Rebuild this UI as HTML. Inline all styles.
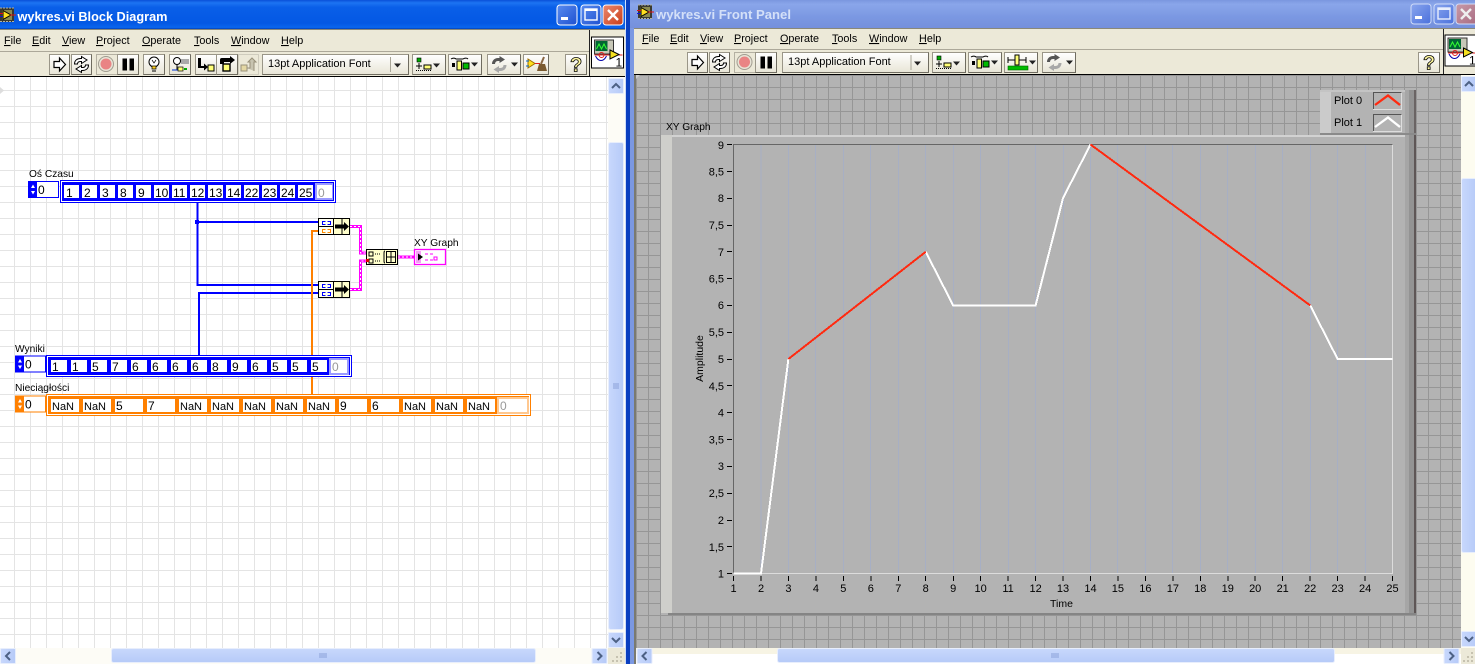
<!DOCTYPE html>
<html><head><meta charset="utf-8"><title>wykres.vi</title>
<style>
html,body{margin:0;padding:0;background:#fff;width:1475px;height:664px;overflow:hidden}
svg{position:absolute;left:0;top:0;display:block}
text{font-family:"Liberation Sans",sans-serif;font-size:11px;fill:#000}
.tb{font-weight:bold;font-size:13px}
.b{fill:url(#btn);stroke:#9a9688;stroke-width:1}
.d{fill:none;stroke:#6f6c60;stroke-width:1}
.m{font-size:10.8px}
.l{font-size:10.2px}
.n{font-size:12px}
.u{text-decoration:underline}
</style></head><body>
<svg width="1475" height="664" viewBox="0 0 1475 664" xmlns="http://www.w3.org/2000/svg">
<defs>
<linearGradient id="act" x1="0" y1="0" x2="0" y2="1"><stop offset="0" stop-color="#0a50d8"/><stop offset=".1" stop-color="#1d74f2"/><stop offset=".25" stop-color="#0a5fe8"/><stop offset=".8" stop-color="#0458e4"/><stop offset=".95" stop-color="#0a66ee"/><stop offset="1" stop-color="#0040b8"/></linearGradient>
<linearGradient id="ina" x1="0" y1="0" x2="0" y2="1"><stop offset="0" stop-color="#7a96df"/><stop offset=".15" stop-color="#8aa6ea"/><stop offset=".6" stop-color="#7b98e2"/><stop offset="1" stop-color="#7590dc"/></linearGradient>
<linearGradient id="btn" x1="0" y1="0" x2="0" y2="1"><stop offset="0" stop-color="#fff"/><stop offset="1" stop-color="#e8e5d6"/></linearGradient>
<linearGradient id="thV" x1="0" y1="0" x2="1" y2="0"><stop offset="0" stop-color="#c8d8fc"/><stop offset="1" stop-color="#b6caf8"/></linearGradient>
<linearGradient id="thH" x1="0" y1="0" x2="0" y2="1"><stop offset="0" stop-color="#c8d8fc"/><stop offset="1" stop-color="#b6caf8"/></linearGradient>
<linearGradient id="bl" x1="0" y1="0" x2="1" y2="1"><stop offset="0" stop-color="#5a8cf0"/><stop offset="1" stop-color="#1d50d0"/></linearGradient>
<linearGradient id="rd" x1="0" y1="0" x2="1" y2="1"><stop offset="0" stop-color="#ec8a70"/><stop offset="1" stop-color="#c83c18"/></linearGradient>
<linearGradient id="bl2" x1="0" y1="0" x2="1" y2="1"><stop offset="0" stop-color="#8aa6ee"/><stop offset="1" stop-color="#4a70dc"/></linearGradient>
<linearGradient id="rd2" x1="0" y1="0" x2="1" y2="1"><stop offset="0" stop-color="#c89aa8"/><stop offset="1" stop-color="#a86a80"/></linearGradient>
<pattern id="gl" patternUnits="userSpaceOnUse" x="14" y="10" width="16" height="16"><rect width="16" height="16" fill="#fff"/><rect width="16" height="1" fill="#e4e4e4"/><rect width="1" height="16" fill="#e4e4e4"/></pattern>
<pattern id="gr" patternUnits="userSpaceOnUse" x="0" y="3" width="12" height="12"><rect width="12" height="12" fill="#b3b3b3"/><rect width="12" height="1" fill="#969696"/><rect width="1" height="12" fill="#969696"/></pattern>
<g id="upA"><rect x="0" y="0" width="15" height="15" rx="1" fill="url(#thV)" stroke="#e8eefc"/><path d="M3.500 9.500 7.500 5.500 11.500 9.500" fill="none" stroke="#4d6185" stroke-width="2"/></g>
<g id="dnA"><rect x="0" y="0" width="15" height="15" rx="1" fill="url(#thV)" stroke="#e8eefc"/><path d="M3.500 5.500 7.500 9.500 11.500 5.500" fill="none" stroke="#4d6185" stroke-width="2"/></g>
<g id="lfA"><rect x="0" y="0" width="15" height="15" rx="1" fill="url(#thV)" stroke="#e8eefc"/><path d="M9.500 3.500 5.500 7.500 9.500 11.500" fill="none" stroke="#4d6185" stroke-width="2"/></g>
<g id="rtA"><rect x="0" y="0" width="15" height="15" rx="1" fill="url(#thV)" stroke="#e8eefc"/><path d="M5.500 3.500 9.500 7.500 5.500 11.500" fill="none" stroke="#4d6185" stroke-width="2"/></g>
<g id="vi"><rect x="0" y="0" width="14" height="14" fill="#3a3a30"/><path d="M0 0h14M0 13.500h14" stroke="#b0b0a0" stroke-dasharray="2 1"/><rect x="2" y="2" width="10" height="10" fill="#8a8a50"/><path d="M3 2.500 11 7 3 11.500z" fill="#ffe020" stroke="#000"/><path d="M-1 5.500h4" stroke="#e01010"/><path d="M-1 8.500h4" stroke="#1010e0"/><path d="M10 7h6" stroke="#e01010"/></g>
<g id="conn"><rect x="0" y="0" width="32" height="31" fill="#fff" stroke="#000"/><rect x="3" y="3" width="19" height="14" fill="#c8c8b8" stroke="#333"/><rect x="4" y="4" width="12" height="10" fill="#063"/><path d="M5 12 7.500 7 10 12 12.500 7 15 12" fill="none" stroke="#3f3" stroke-width="1"/><path d="M4 19c3 6 8 6 11 0" fill="none" stroke="#00a" stroke-width="1"/><circle cx="10" cy="18" r="2.500" fill="none" stroke="#e02020"/><path d="M3 18H31" stroke="#e02020"/><path d="M18.500 13 27.500 17.500 18.500 22z" fill="#f5e020" stroke="#000"/><text x="24" y="29.500" style="font-size:12px">1</text></g>
<g id="runI"><path d="M5 7.500h5.500V4l6 6.500-6 6.500v-3.500H5z" fill="#fff" stroke="#000" stroke-width="1.200"/></g>
<g id="loopI"><path d="M3.500 10c0-3.500 2.500-5.500 6-5.500h1V2.500l5.500 3.500-5.500 3.500V7.500h-1c-2 0-3 1-3 2.500z" fill="#fff" stroke="#000"/><path d="M17.500 11c0 3.500-2.500 5.500-6 5.500h-1v2L5 15l5.500-3.500v2h1c2 0 3-1 3-2.500z" fill="#fff" stroke="#000"/></g>
<g id="recI"><circle cx="10" cy="10" r="7.500" fill="#e8e4d6" stroke="#a09c90"/><circle cx="10" cy="10" r="5.500" fill="#e98484"/></g>
<g id="pauseI"><rect x="5" y="4" width="4.500" height="12" fill="#000"/><rect x="12" y="4" width="4.500" height="12" fill="#000"/></g>
<g id="alignI"><rect x="5" y="4" width="4" height="4" fill="#0a0" stroke="#000" stroke-width=".6"/><path d="M7 9v3M4 12h6M7 12v3" stroke="#000" fill="none"/><rect x="12" y="11" width="7" height="4" fill="#ff7" stroke="#000"/><path d="M4 16.500h15" stroke="#000" stroke-dasharray="1 1"/><path d="M21 9.500h7l-3.500 4z" fill="#222"/></g>
<g id="distI"><path d="M3 5c3-2 5 0 5 0h7s3-2 5 0" fill="none" stroke="#000"/><rect x="4" y="9" width="3" height="4" fill="#000"/><rect x="9" y="7" width="4.500" height="9" fill="#ff7" stroke="#000"/><rect x="15" y="9" width="6" height="6" fill="#0b0" stroke="#000"/><path d="M23 8.500h7l-3.500 4z" fill="#222"/></g>
<g id="reordI"><path d="M3 10c0-3.500 2.500-6 6-6h1.500V2l5.500 3.500L10.500 9V7H9c-2 0-3 1.500-3 3z" fill="#555"/><path d="M17.500 11c0 3.500-2.500 6-6 6H10v2l-5.500-3.500L10 12v2h1.500c2 0 3-1.500 3-3z" fill="#a8a8a8"/><path d="M22 8.500h7l-3.500 4z" fill="#222"/></g>
<g id="helpI"><text x="5" y="16.500" style="font-size:20px;font-weight:bold;fill:#fff8a0;stroke:#000;stroke-width:.8px">?</text></g>
<g id="bund"><rect x=".5" y=".5" width="31" height="16" fill="#ffffcc" stroke="#000"/><rect x="1" y="1" width="14" height="7.500" fill="#fffff0"/><rect x="1" y="9" width="14" height="7" fill="#fffff0"/><path d="M1 8.500h14M15.500 1v15M24 1v15" stroke="#000" fill="none"/><path d="M17 6.500h9V4l5 4.500-5 4.500v-2.500h-9z" fill="#000"/></g>
<g id="idx"><rect x=".5" y=".5" width="30" height="16" fill="#fff" stroke="currentColor"/><rect x="1" y="1" width="8" height="15" fill="currentColor"/><path d="M3 7 5 3.500 7 7zM3 10 5 13.500 7 10z" fill="#fff"/><text x="10" y="13" style="font-size:12px">0</text></g>
</defs>

<!-- LEFT WINDOW -->
<rect x="0" y="0" width="630" height="664" fill="#0a50d8"/>
<rect x="0" y="0" width="630" height="29" fill="url(#act)"/>
<use href="#vi" x="0" y="8"/>
<text class="tb" x="17.500" y="21" textLength="150" lengthAdjust="spacingAndGlyphs" style="fill:#fff">wykres.vi Block Diagram</text>
<rect x="557" y="5" width="20" height="20" rx="3" fill="url(#bl)" stroke="#fff"/><rect x="561" y="17" width="7" height="3" fill="#fff"/>
<rect x="581" y="5" width="20" height="20" rx="3" fill="url(#bl)" stroke="#fff"/><rect x="585" y="9" width="12" height="11" fill="none" stroke="#fff" stroke-width="1.400"/><path d="M585 10h12" stroke="#fff" stroke-width="2"/>
<rect x="603" y="5" width="20" height="20" rx="3" fill="url(#rd)" stroke="#fff"/><path d="M608 10 618 20M618 10 608 20" stroke="#fff" stroke-width="2.400"/>
<rect x="0" y="29" width="625" height="23" fill="#ece9d8"/>
<rect x="0" y="29" width="625" height="1" fill="#8a8878"/>
<rect x="0" y="51" width="589" height="1" fill="#aca899"/>
<rect x="0" y="52" width="625" height="24" fill="#ece9d8"/>
<rect x="0" y="76" width="625" height="1" fill="#000"/>
<rect x="589" y="30" width="1" height="46" fill="#222"/>
<text class="m" x="4" y="44"><tspan class="u">F</tspan>ile</text>
<text class="m" x="32" y="44"><tspan class="u">E</tspan>dit</text>
<text class="m" x="62" y="44"><tspan class="u">V</tspan>iew</text>
<text class="m" x="96" y="44"><tspan class="u">P</tspan>roject</text>
<text class="m" x="142" y="44"><tspan class="u">O</tspan>perate</text>
<text class="m" x="194" y="44"><tspan class="u">T</tspan>ools</text>
<text class="m" x="231" y="44"><tspan class="u">W</tspan>indow</text>
<text class="m" x="281" y="44"><tspan class="u">H</tspan>elp</text>
<use href="#conn" x="591.500" y="37"/>
<!-- left toolbar -->
<rect class="b" x="49.500" y="54.500" width="20" height="20"/><path class="d" d="M69.500 54.500v20h-20"/><use href="#runI" x="49" y="54"/>
<rect class="b" x="71.500" y="54.500" width="20" height="20"/><path class="d" d="M91.500 54.500v20h-20"/><use href="#loopI" x="71" y="54"/>
<rect x="96.500" y="54.500" width="21" height="20" fill="#ece9d8" stroke="#b4b0a2"/><use href="#recI" x="96" y="54"/>
<rect class="b" x="117.500" y="54.500" width="21" height="20"/><path class="d" d="M138.500 54.500v20h-21"/><use href="#pauseI" x="117.500" y="54.500"/>
<rect class="b" x="143.500" y="54.500" width="21" height="20"/><path class="d" d="M164.500 54.500v20h-21"/>
<circle cx="154" cy="62" r="5" fill="#fff" stroke="#000"/><path d="M152 66h4v3h-4z" fill="#ffd020" stroke="#000" stroke-width=".7"/><path d="M152 71h4" stroke="#000"/><path d="M152 60l2 3 2-3" fill="none" stroke="#000" stroke-width=".7"/>
<rect class="b" x="169.500" y="54.500" width="21" height="20"/><path class="d" d="M190.500 54.500v20h-21"/>
<circle cx="177" cy="61" r="3.500" fill="#fff" stroke="#000"/><path d="M177 64.500V70" stroke="#000"/><rect x="181" y="59" width="8" height="5" fill="#aaa"/><path d="M172 70h10" stroke="#03c"/><rect x="178" y="67" width="5" height="4" fill="#ff7" stroke="#000" stroke-width=".7"/><path d="M184 69h3" stroke="#0a0" stroke-width="2"/>
<rect class="b" x="195.500" y="54.500" width="21" height="20"/><path class="d" d="M216.500 54.500v20h-21"/>
<path d="M198 58h3v8h3v-2.500l4 3.500-4 3.500V68h-6z" fill="#000"/><rect x="208" y="65" width="6" height="6" fill="#ff7" stroke="#000"/>
<rect class="b" x="216.500" y="54.500" width="21" height="20"/><path class="d" d="M237.500 54.500v20h-21"/>
<path d="M220 64v-4c0-2 1-2 3-2h7v-2l5 4-5 4v-2h-6v2z" fill="#000"/><rect x="223" y="64" width="7" height="7" fill="#ff7" stroke="#000" stroke-width="1.400"/>
<rect x="238.500" y="54.500" width="20" height="20" fill="#ece9d8" stroke="#cfccbd"/>
<rect x="241" y="65" width="6" height="6" fill="#e4d8a4" stroke="#98917a"/><path d="M247 68h3v-6h-2l4-4 4 4h-2v9" fill="#c8c4b0" stroke="#98917a"/>
<rect class="b" x="262.500" y="54.500" width="146" height="20"/><path class="d" d="M408.500 54.500v20h-146"/>
<text x="268" y="67">13pt Application Font</text><path d="M390.500 57v15" stroke="#a8a597"/><path d="M394 63.500h7l-3.500 4z" fill="#222"/>
<rect class="b" x="412.500" y="54.500" width="33" height="20"/><path class="d" d="M445.500 54.500v20h-33"/><use href="#alignI" x="412" y="54"/>
<rect class="b" x="448.500" y="54.500" width="33" height="20"/><path class="d" d="M481.500 54.500v20h-33"/><use href="#distI" x="448" y="54"/>
<rect class="b" x="487.500" y="54.500" width="33" height="20"/><path class="d" d="M520.500 54.500v20h-33"/><use href="#reordI" x="489" y="54"/>
<rect class="b" x="523.500" y="54.500" width="25" height="20"/><path class="d" d="M548.500 54.500v20h-25"/>
<path d="M528 59l7 4.500-7 4.500z" fill="#ffe020" stroke="#a07000"/><path d="M526 61h3M526 66h3" stroke="#06c"/><path d="M535 63.500h5" stroke="#e02020"/><path d="M544 57l-3 7" stroke="#864" stroke-width="2"/><path d="M537 71l2-7h6l2 7z" fill="#7a5a30"/>
<rect class="b" x="565.500" y="54.500" width="21" height="20"/><path class="d" d="M586.500 54.500v20h-21"/><use href="#helpI" x="565" y="55"/>

<!-- left canvas -->
<rect x="0" y="77" width="608" height="571" fill="url(#gl)"/>
<path d="M0 87l4 3.500-4 3.500z" fill="#ddd"/>
<!-- left scrollbars -->
<rect x="608" y="77" width="17" height="571" fill="#fdfcf6"/>
<rect x="608.500" y="142.500" width="15" height="487" rx="2" fill="url(#thV)" stroke="#e8eefc"/>
<path d="M613 384h6M613 386h6M613 388h6" stroke="#8aa0d8"/>
<use href="#upA" x="608.500" y="78.500"/><use href="#dnA" x="608.500" y="632.500"/>
<rect x="0" y="648" width="608" height="16" fill="#fdfcf6"/>
<rect x="111.500" y="648.500" width="424" height="14" rx="2" fill="url(#thH)" stroke="#e8eefc"/>
<path d="M320 653v5M322 653v5M324 653v5M326 653v5" stroke="#8aa0d8"/>
<use href="#lfA" x=".5" y="648.500"/><use href="#rtA" x="592" y="648.500"/>
<rect x="608" y="648" width="17" height="16" fill="#ece9d8"/>
<path d="M620 652h2v2h-2zM616 656h2v2h-2zM620 656h2v2h-2zM612 660h2v2h-2zM616 660h2v2h-2zM620 660h2v2h-2z" fill="#c6c2b0"/>
<rect x="625" y="0" width="1" height="664" fill="#fff" opacity=".8"/>
<rect x="626" y="0" width="4" height="664" fill="#0a3fc0"/>

<!-- DIAGRAM wires -->
<g fill="none">
<path d="M197.500 203V286M197 222H318M197 285H318M199 294V355M198 293H318" stroke="#0000ff" stroke-width="2"/>
<path d="M312 394V231H318" stroke="#ff8000" stroke-width="2"/>
<path d="M350 226.500H360.500V253H367M350 289.500H360.500V261H367M398 257H414" stroke="#ff00ff" stroke-width="3"/>
<path d="M350 226.500H360.500V253H367M350 289.500H360.500V261H367M398 257H414" stroke="#fff" stroke-width="1" stroke-dasharray="2 2"/>
</g>
<rect x="195" y="220" width="4" height="4" fill="#0000ff"/>

<!-- bundle nodes -->
<use href="#bund" x="318" y="218"/>
<path d="M325.500 221.500h-3v3h3M327.500 221.500h3v3h-3" fill="none" stroke="#00f"/><path d="M325.500 229.500h-3v3h3M327.500 229.500h3v3h-3" fill="none" stroke="#f80"/>
<use href="#bund" x="318" y="281"/>
<path d="M325.500 284.500h-3v3h3M327.500 284.500h3v3h-3M325.500 292.500h-3v3h3M327.500 292.500h3v3h-3" fill="none" stroke="#00f"/>
<!-- build array -->
<rect x="366.500" y="249.500" width="31" height="15" fill="#ffffcc" stroke="#000"/>
<rect x="369" y="252" width="4" height="4" fill="none" stroke="#000"/><rect x="369" y="259" width="4" height="4" fill="none" stroke="#000"/>
<path d="M375 254h6M375 261h6" stroke="#000" stroke-dasharray="1 1"/>
<path d="M385 251c-1 0-1 1-1 3v6c0 2 0 3 1 3" fill="none" stroke="#000"/>
<rect x="386.500" y="251.500" width="9" height="11" fill="none" stroke="#000"/><path d="M391 252v10M387 257h8" stroke="#000"/>
<rect x="366" y="259" width="3" height="3" fill="#e00000"/>
<!-- XY terminal -->
<rect x="414.500" y="249.500" width="31" height="15" fill="#fff" stroke="#ff00ff" stroke-width="1.300"/>
<rect x="416" y="251" width="5" height="12" fill="#f4a0f4"/><path d="M418 253.500 423 257 418 260.500z" fill="#000"/>
<path d="M425 254h3M430 254h3M434 257h3v3h-3zM425 260h3M430 260h3" stroke="#ff00ff" fill="none"/>
<text class="l" x="414" y="246">XY Graph</text>

<!-- Os Czasu -->
<text class="l" x="29" y="177" style='font-family:"Liberation Sans","Noto Sans CJK JP",sans-serif'>Oś Czasu</text>
<use href="#idx" x="28" y="181" style="color:#0000ff"/>
<rect x="60.500" y="180.500" width="275" height="22" fill="#fff" stroke="#0000ff"/>
<rect x="62" y="182" width="272" height="19" fill="#0000ff"/>
<g fill="#fff">
<rect x="64" y="185" width="15" height="13"/><rect x="82" y="185" width="15" height="13"/><rect x="100" y="185" width="15" height="13"/><rect x="118" y="185" width="15" height="13"/><rect x="136" y="185" width="15" height="13"/><rect x="154" y="185" width="15" height="13"/><rect x="172" y="185" width="15" height="13"/><rect x="190" y="185" width="15" height="13"/><rect x="208" y="185" width="15" height="13"/><rect x="226" y="185" width="15" height="13"/><rect x="244" y="185" width="15" height="13"/><rect x="262" y="185" width="15" height="13"/><rect x="280" y="185" width="15" height="13"/><rect x="298" y="185" width="15" height="13"/>
</g>
<rect x="315" y="183" width="18" height="17" fill="#9a9aff"/><rect x="317" y="185" width="15" height="13" fill="#fff"/>
<text class="n" x="66" y="197">1</text><text class="n" x="84" y="197">2</text><text class="n" x="102" y="197">3</text><text class="n" x="120" y="197">8</text><text class="n" x="138" y="197">9</text><text class="n" x="155" y="197">10</text><text class="n" x="173" y="197">11</text><text class="n" x="191" y="197">12</text><text class="n" x="209" y="197">13</text><text class="n" x="227" y="197">14</text><text class="n" x="245" y="197">22</text><text class="n" x="263" y="197">23</text><text class="n" x="281" y="197">24</text><text class="n" x="299" y="197">25</text><text class="n" x="318" y="197" style="fill:#999">0</text>

<!-- Wyniki -->
<text class="l" x="15" y="352">Wyniki</text>
<use href="#idx" x="15" y="355.500" style="color:#0000ff"/>
<rect x="46.500" y="355.500" width="305" height="21" fill="#fff" stroke="#0000ff"/>
<rect x="48" y="357" width="302" height="18" fill="#0000ff"/>
<g fill="#fff">
<rect x="51" y="360" width="16" height="12"/><rect x="71" y="360" width="16" height="12"/><rect x="91" y="360" width="16" height="12"/><rect x="111" y="360" width="16" height="12"/><rect x="131" y="360" width="16" height="12"/><rect x="151" y="360" width="16" height="12"/><rect x="171" y="360" width="16" height="12"/><rect x="191" y="360" width="16" height="12"/><rect x="211" y="360" width="16" height="12"/><rect x="231" y="360" width="16" height="12"/><rect x="251" y="360" width="16" height="12"/><rect x="271" y="360" width="16" height="12"/><rect x="291" y="360" width="16" height="12"/><rect x="311" y="360" width="16" height="12"/>
</g>
<rect x="329" y="358" width="20" height="17" fill="#9a9aff"/><rect x="331" y="360" width="16" height="13" fill="#fff"/>
<text class="n" x="52" y="371">1</text><text class="n" x="72" y="371">1</text><text class="n" x="92" y="371">5</text><text class="n" x="112" y="371">7</text><text class="n" x="132" y="371">6</text><text class="n" x="152" y="371">6</text><text class="n" x="172" y="371">6</text><text class="n" x="192" y="371">6</text><text class="n" x="212" y="371">8</text><text class="n" x="232" y="371">9</text><text class="n" x="252" y="371">6</text><text class="n" x="272" y="371">5</text><text class="n" x="292" y="371">5</text><text class="n" x="312" y="371">5</text><text class="n" x="332" y="371" style="fill:#999">0</text>

<!-- Nieciaglosci -->
<text class="l" x="15" y="391" style='font-family:"Liberation Sans","Noto Sans CJK JP",sans-serif'>Nieciągłości</text>
<use href="#idx" x="15" y="395.500" style="color:#ff8000"/>
<rect x="46.500" y="394.500" width="484" height="21" fill="#fff" stroke="#ff8000"/>
<rect x="48" y="396" width="481" height="18" fill="#ff8000"/>
<g fill="#fff">
<rect x="51" y="399" width="28" height="13"/><rect x="83" y="399" width="28" height="13"/><rect x="115" y="399" width="28" height="13"/><rect x="147" y="399" width="28" height="13"/><rect x="179" y="399" width="28" height="13"/><rect x="211" y="399" width="28" height="13"/><rect x="243" y="399" width="28" height="13"/><rect x="275" y="399" width="28" height="13"/><rect x="307" y="399" width="28" height="13"/><rect x="339" y="399" width="28" height="13"/><rect x="371" y="399" width="28" height="13"/><rect x="403" y="399" width="28" height="13"/><rect x="435" y="399" width="28" height="13"/><rect x="467" y="399" width="28" height="13"/>
</g>
<rect x="497" y="397" width="32" height="17" fill="#ffc890"/><rect x="499" y="399" width="28" height="13" fill="#fff"/>
<text x="52" y="410">NaN</text><text x="84" y="410">NaN</text><text class="n" x="116" y="410">5</text><text class="n" x="148" y="410">7</text><text x="180" y="410">NaN</text><text x="212" y="410">NaN</text><text x="244" y="410">NaN</text><text x="276" y="410">NaN</text><text x="308" y="410">NaN</text><text class="n" x="340" y="410">9</text><text class="n" x="372" y="410">6</text><text x="404" y="410">NaN</text><text x="436" y="410">NaN</text><text x="468" y="410">NaN</text><text class="n" x="500" y="410" style="fill:#999">0</text>

<!-- RIGHT WINDOW -->
<rect x="630" y="0" width="845" height="664" fill="#7b98e2"/>
<rect x="630" y="0" width="845" height="28" fill="url(#ina)"/>
<use href="#vi" x="638" y="5"/>
<text class="tb" x="656" y="19" textLength="135" lengthAdjust="spacingAndGlyphs" style="fill:#d4e0f8">wykres.vi Front Panel</text>
<rect x="1411" y="4" width="20" height="20" rx="3" fill="url(#bl2)" stroke="#d0dcf8"/><rect x="1415" y="16" width="7" height="3" fill="#fff"/>
<rect x="1434" y="4" width="20" height="20" rx="3" fill="url(#bl2)" stroke="#d0dcf8"/><rect x="1438" y="8" width="12" height="11" fill="none" stroke="#e8eefc" stroke-width="1.400"/><path d="M1438 9h12" stroke="#e8eefc" stroke-width="2"/>
<rect x="1456" y="4" width="22" height="20" rx="3" fill="url(#rd2)" stroke="#d0dcf8"/><path d="M1461 9 1471 19M1471 9 1461 19" stroke="#eee" stroke-width="2.400"/>
<rect x="634" y="28" width="841" height="1" fill="#8a8878"/>
<rect x="634" y="29" width="841" height="21" fill="#ece9d8"/>
<rect x="634" y="49" width="809" height="1" fill="#aca899"/>
<rect x="634" y="50" width="841" height="24" fill="#ece9d8"/>
<rect x="634" y="74" width="841" height="1" fill="#000"/>
<rect x="1443" y="29" width="1" height="45" fill="#222"/>
<text class="m" x="642" y="42"><tspan class="u">F</tspan>ile</text>
<text class="m" x="670" y="42"><tspan class="u">E</tspan>dit</text>
<text class="m" x="700" y="42"><tspan class="u">V</tspan>iew</text>
<text class="m" x="734" y="42"><tspan class="u">P</tspan>roject</text>
<text class="m" x="780" y="42"><tspan class="u">O</tspan>perate</text>
<text class="m" x="832" y="42"><tspan class="u">T</tspan>ools</text>
<text class="m" x="869" y="42"><tspan class="u">W</tspan>indow</text>
<text class="m" x="919" y="42"><tspan class="u">H</tspan>elp</text>
<use href="#conn" x="1445" y="35"/>
<!-- right toolbar -->
<rect class="b" x="687.500" y="52.500" width="20" height="20"/><path class="d" d="M707.500 52.500v20h-20"/><use href="#runI" x="687" y="52"/>
<rect class="b" x="709.500" y="52.500" width="20" height="20"/><path class="d" d="M729.500 52.500v20h-20"/><use href="#loopI" x="709" y="52"/>
<rect x="734.500" y="52.500" width="21" height="20" fill="#ece9d8" stroke="#b4b0a2"/><use href="#recI" x="734.500" y="52"/>
<rect class="b" x="755.500" y="52.500" width="21" height="20"/><path class="d" d="M776.500 52.500v20h-21"/><use href="#pauseI" x="755.500" y="52.500"/>
<rect class="b" x="782.500" y="52.500" width="146" height="20"/><path class="d" d="M928.500 52.500v20h-146"/>
<text x="788" y="65">13pt Application Font</text><path d="M911 55v15" stroke="#a8a597"/><path d="M914 61.500h7l-3.500 4z" fill="#222"/>
<rect class="b" x="932.500" y="52.500" width="33" height="20"/><path class="d" d="M965.500 52.500v20h-33"/><use href="#alignI" x="932" y="52"/>
<rect class="b" x="968.500" y="52.500" width="33" height="20"/><path class="d" d="M1001.500 52.500v20h-33"/><use href="#distI" x="968" y="52"/>
<rect class="b" x="1004.500" y="52.500" width="33" height="20"/><path class="d" d="M1037.500 52.500v20h-33"/>
<path d="M1008 60h18M1008 57v6M1026 57v6" stroke="#000" fill="none"/><rect x="1015" y="55" width="4" height="10" fill="#ff7" stroke="#000"/><rect x="1008" y="66" width="20" height="4" fill="#0b0" stroke="#060" stroke-width=".6"/><path d="M1029 60.500h7l-3.500 4z" fill="#222"/>
<rect class="b" x="1042.500" y="52.500" width="33" height="20"/><path class="d" d="M1075.500 52.500v20h-33"/><use href="#reordI" x="1044" y="52"/>
<rect class="b" x="1418.500" y="52.500" width="21" height="20"/><path class="d" d="M1439.500 52.500v20h-21"/><use href="#helpI" x="1418" y="53"/>

<!-- right panel -->
<rect x="634" y="75" width="2" height="589" fill="#7a7a70"/>
<rect x="636" y="75" width="825" height="573" fill="url(#gr)"/>
<path d="M636 75h4l-4 4z" fill="#ccc"/>

<!-- Legend -->
<rect x="1320" y="90" width="96" height="44" fill="#b3b3b3"/>
<rect x="1320" y="90" width="11" height="44" fill="#cbcbcb"/>
<rect x="1320" y="90" width="96" height="2" fill="#c4c4c4"/>
<rect x="1405" y="90" width="4" height="44" fill="#a6a6a6"/>
<rect x="1409" y="90" width="5" height="44" fill="#939393"/>
<rect x="1414" y="90" width="2" height="44" fill="#6a6464"/>
<rect x="1320" y="133" width="96" height="2" fill="#8a8a8a"/>
<text x="1334" y="104">Plot 0</text><text x="1334" y="126">Plot 1</text>
<rect x="1373.500" y="92.500" width="28" height="17" fill="#b3b3b3" stroke="#ddd"/><path d="M1373.500 109V92.500H1401.500" fill="none" stroke="#555"/>
<path d="M1375 105 1388 95.500 1400 105" fill="none" stroke="#ff2a10" stroke-width="2.300"/>
<rect x="1373.500" y="114.500" width="28" height="17" fill="#b3b3b3" stroke="#ddd"/><path d="M1373.500 131V114.500H1401.500" fill="none" stroke="#555"/>
<path d="M1375 127 1388 117.500 1400 127" fill="none" stroke="#fff" stroke-width="2.300"/>

<!-- XY Graph panel -->
<text class="l" x="666" y="130">XY Graph</text>
<rect x="661" y="135" width="755" height="480" fill="#b3b3b3"/>
<rect x="661" y="135" width="744" height="2" fill="#d2d2d2"/>
<rect x="661" y="135" width="11" height="478" fill="#cfcfcb"/>
<rect x="1405" y="135" width="4" height="480" fill="#a6a6a6"/>
<rect x="1409" y="135" width="5" height="480" fill="#939393"/>
<rect x="1414" y="135" width="2" height="480" fill="#5e5656"/>
<rect x="668" y="613" width="748" height="2" fill="#858585"/>

<!-- Plot grid -->
<path d="M761 145V573M788.500 145V573M815.500 145V573M843.500 145V573M870.500 145V573M898.500 145V573M925.500 145V573M953.500 145V573M980.500 145V573M1008.500 145V573M1035.500 145V573M1063.500 145V573M1090.500 145V573M1117.500 145V573M1145.500 145V573M1172.500 145V573M1200.500 145V573M1227.500 145V573M1255.500 145V573M1282.500 145V573M1310.500 145V573M1337.500 145V573M1365.500 145V573" stroke="#a7afc4" stroke-width="1" fill="none"/>
<path d="M733.500 573.500H1392.500V144.500" fill="none" stroke="#dcdcdc"/>
<path d="M733.500 573.500V144.500H1392.500" fill="none" stroke="#666"/>
<!-- ticks -->
<path d="M727 144.500h5M727 171.500h5M727 198.500h5M727 225.500h5M727 251.500h5M727 278.500h5M727 305.500h5M727 332.500h5M727 359.500h5M727 385.500h5M727 412.500h5M727 439.500h5M727 466.500h5M727 493.500h5M727 520.500h5M727 546.500h5M727 573.500h5" stroke="#000" fill="none"/>
<path d="M733.500 576v5M761 576v5M788.500 576v5M816 576v5M843.500 576v5M871 576v5M898.500 576v5M925.500 576v5M953.500 576v5M980.500 576v5M1008 576v5M1035.500 576v5M1063 576v5M1090.500 576v5M1118 576v5M1145.500 576v5M1173 576v5M1200.500 576v5M1228 576v5M1255 576v5M1282.500 576v5M1310 576v5M1337.500 576v5M1365 576v5M1392.500 576v5" stroke="#000" fill="none"/>
<g text-anchor="end">
<text x="724" y="149">9</text><text x="724" y="175.500">8,5</text><text x="724" y="202">8</text><text x="724" y="229">7,5</text><text x="724" y="256">7</text><text x="724" y="282.500">6,5</text><text x="724" y="309">6</text><text x="724" y="336">5,5</text><text x="724" y="363">5</text><text x="724" y="390">4,5</text><text x="724" y="416.500">4</text><text x="724" y="443.500">3,5</text><text x="724" y="470">3</text><text x="724" y="497">2,5</text><text x="724" y="524">2</text><text x="724" y="551">1,5</text><text x="724" y="577.500">1</text>
</g>
<g text-anchor="middle">
<text x="733.500" y="592">1</text><text x="761" y="592">2</text><text x="788.400" y="592">3</text><text x="815.900" y="592">4</text><text x="843.300" y="592">5</text><text x="870.800" y="592">6</text><text x="898.300" y="592">7</text><text x="925.700" y="592">8</text><text x="953.200" y="592">9</text><text x="980.600" y="592">10</text><text x="1008.100" y="592">11</text><text x="1035.600" y="592">12</text><text x="1063" y="592">13</text><text x="1090.500" y="592">14</text><text x="1117.900" y="592">15</text><text x="1145.400" y="592">16</text><text x="1172.900" y="592">17</text><text x="1200.300" y="592">18</text><text x="1227.800" y="592">19</text><text x="1255.200" y="592">20</text><text x="1282.700" y="592">21</text><text x="1310.200" y="592">22</text><text x="1337.600" y="592">23</text><text x="1365.100" y="592">24</text><text x="1392.500" y="592">25</text>
<text x="1061.500" y="607" style="font-size:10.500px">Time</text>
<text transform="translate(703 358.500) rotate(-90)" style="font-size:10.500px">Amplitude</text>
</g>
<!-- plots -->
<path shape-rendering="crispEdges" d="M733.500 573.500H761L788.400 359M925.700 251.800 953.200 305.400H1035.600L1063 198.100 1090.500 144.500M1310.200 305.400 1337.600 359H1392.500" fill="none" stroke="#fff" stroke-width="2"/>
<path shape-rendering="crispEdges" d="M788.400 359 925.700 251.800M1090.500 144.500 1310.200 305.400" fill="none" stroke="#ff2a10" stroke-width="2"/>

<!-- right scrollbars -->
<rect x="1461" y="75" width="14" height="573" fill="#fdfcf0"/>
<rect x="1461.500" y="178.500" width="15" height="374" rx="2" fill="url(#thV)" stroke="#e8eefc"/>
<use href="#upA" x="1461.500" y="76.500"/><use href="#dnA" x="1461.500" y="631.500"/>
<rect x="636" y="648" width="825" height="6" fill="#f7f4e4"/>
<rect x="636" y="654" width="825" height="10" fill="#fff"/>
<rect x="777.500" y="648.500" width="557" height="14" rx="2" fill="url(#thH)" stroke="#e8eefc"/>
<path d="M1052 653v5M1054 653v5M1056 653v5M1058 653v5" stroke="#8aa0d8"/>
<use href="#lfA" x="637" y="648.500"/><use href="#rtA" x="1444" y="648.500"/>
<rect x="1461" y="648" width="14" height="16" fill="#ece9d8"/>
<path d="M1471 652h2v2h-2zM1467 656h2v2h-2zM1471 656h2v2h-2zM1463 660h2v2h-2zM1467 660h2v2h-2zM1471 660h2v2h-2z" fill="#c6c2b0"/>
</svg>
</body></html>
